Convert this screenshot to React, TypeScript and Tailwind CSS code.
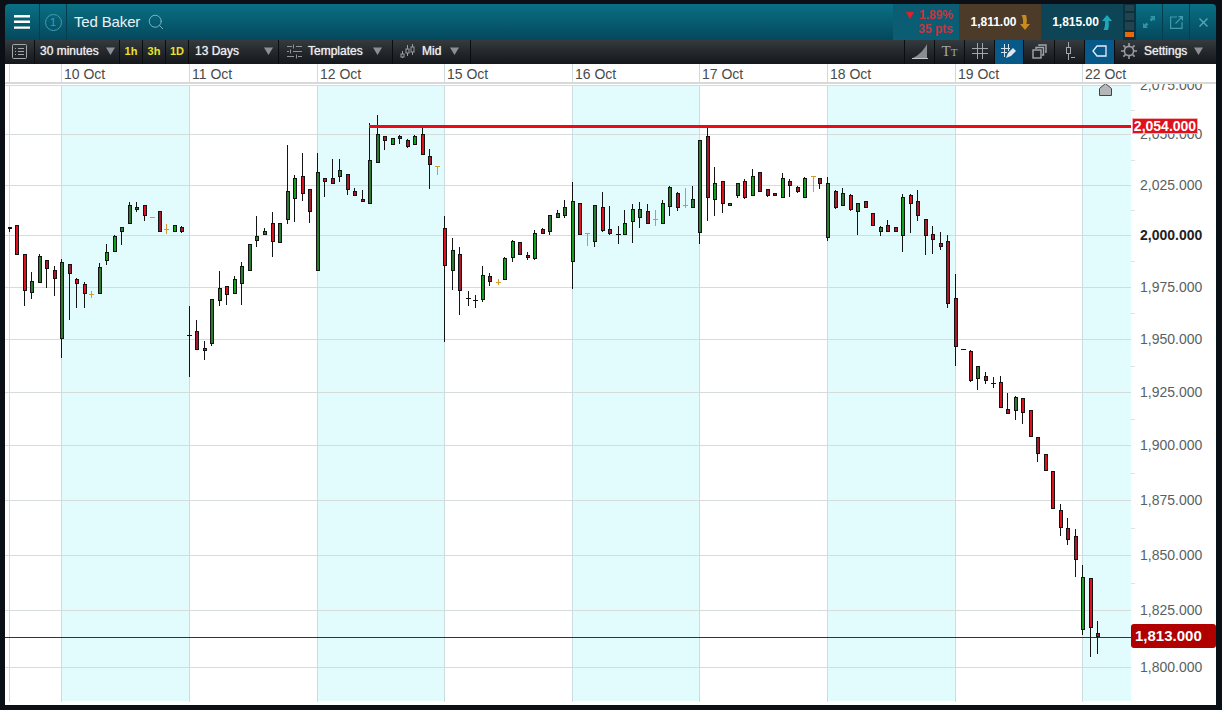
import { Search } from 'lucide-react';
import type { ReactNode } from 'react';

// zx, wick top, wick bottom, body top, body bottom, colour (zoomed-in coords, see seg())
type Bar = [number, number, number, number, number, string];
type Doji = [number, number, number, number];

const fills: Record<string, string> = { r: '#e0101c', R: '#a8182c', g: '#12a01e', G: '#2a7a32' };

const segA: Bar[] = [
  [30, 382, 395, 382, 388, 'G'], [51, 376, 466, 376, 466, 'r'], [74, 463, 617, 463, 572, 'r'], [96, 516, 596, 544, 578, 'G'],
  [120, 463, 548, 468, 548, 'G'], [141, 481, 564, 481, 506, 'R'], [164, 498, 587, 511, 536, 'R'], [185, 478, 773, 487, 716, 'G'],
  [209, 493, 659, 493, 521, 'R'], [231, 534, 624, 537, 551, 'r'], [254, 546, 623, 552, 581, 'r'], [299, 489, 581, 502, 581, 'G'],
  [321, 432, 495, 457, 482, 'g'], [345, 405, 455, 408, 455, 'g'], [366, 382, 435, 382, 395, 'G'], [390, 306, 371, 316, 371, 'G'],
  [411, 306, 336, 321, 329, 'G'], [435, 316, 363, 316, 347, 'r'], [480, 334, 395, 334, 395, 'R'], [525, 376, 395, 376, 395, 'g'],
  [546, 378, 399, 381, 396, 'R'], [591, 660, 749, 693, 749, 'R'], [614, 722, 780, 744, 752, 'G'], [636, 598, 738, 598, 732, 'G'],
  [660, 513, 618, 565, 602, 'G'], [681, 559, 615, 559, 584, 'r'], [705, 529, 581, 538, 581, 'g'], [726, 487, 615, 499, 551, 'G'],
  [750, 432, 512, 432, 512, 'G'], [771, 348, 440, 409, 422, 'G'], [795, 384, 404, 394, 404, 'G'], [819, 336, 470, 370, 425, 'r'],
  [840, 370, 428, 370, 428, 'G'], [864, 135, 372, 274, 359, 'G'], [885, 226, 365, 235, 298, 'g'], [909, 159, 303, 229, 281, 'r'],
  [930, 268, 369, 268, 335, 'R'], [954, 159, 512, 217, 512, 'G'],
];
const segB: Bar[] = [
  [45, 235, 291, 235, 245, 'r'], [69, 177, 251, 235, 251, 'R'], [90, 177, 246, 211, 230, 'G'], [114, 223, 285, 223, 269, 'R'],
  [135, 265, 287, 274, 287, 'R'], [159, 270, 305, 297, 305, 'R'], [180, 69, 311, 181, 311, 'G'], [204, 45, 188, 103, 188, 'G'],
  [225, 108, 150, 108, 122, 'R'], [249, 115, 134, 115, 134, 'g'], [270, 105, 132, 109, 116, 'R'], [294, 118, 144, 120, 141, 'R'],
  [315, 105, 134, 108, 134, 'g'], [339, 84, 164, 103, 164, 'r'], [360, 148, 267, 169, 194, 'R'], [405, 348, 725, 385, 497, 'r'],
  [429, 414, 570, 451, 512, 'G'], [450, 441, 645, 463, 572, 'R'], [519, 498, 606, 526, 600, 'g'], [540, 519, 558, 529, 545, 'R'],
  [585, 471, 539, 475, 539, 'g'], [609, 420, 486, 423, 473, 'g'], [630, 427, 464, 427, 464, 'R'], [654, 456, 480, 465, 474, 'R'],
  [675, 390, 480, 400, 477, 'g'], [699, 384, 401, 387, 401, 'R'], [720, 346, 405, 346, 395, 'G'], [744, 330, 353, 339, 353, 'G'],
  [765, 300, 354, 322, 347, 'G'], [789, 246, 567, 304, 485, 'g'], [810, 310, 404, 310, 404, 'r'], [855, 316, 440, 316, 425, 'G'],
  [879, 276, 396, 322, 393, 'r'], [900, 318, 405, 388, 402, 'R'], [945, 330, 404, 370, 404, 'g'],
];
const segC: Bar[] = [
  [9, 282, 398, 298, 335, 'g'], [30, 276, 353, 298, 323, 'G'], [54, 282, 341, 304, 341, 'R'], [99, 270, 341, 280, 341, 'g'],
  [120, 228, 318, 232, 292, 'G'], [144, 246, 303, 250, 293, 'R'], [189, 228, 293, 268, 293, 'G'], [210, 91, 402, 91, 368, 'G'],
  [234, 54, 333, 79, 263, 'R'], [255, 171, 318, 220, 269, 'g'], [279, 214, 309, 214, 281, 'r'], [300, 280, 287, 280, 287, 'G'],
  [324, 220, 264, 220, 258, 'G'], [345, 208, 267, 214, 264, 'r'], [369, 177, 257, 199, 257, 'g'], [390, 187, 245, 187, 245, 'R'],
  [414, 238, 261, 238, 258, 'R'], [435, 250, 257, 250, 257, 'R'], [459, 189, 263, 205, 263, 'g'], [480, 208, 261, 214, 227, 'R'],
  [504, 229, 249, 232, 246, 'R'], [525, 202, 263, 205, 263, 'g'], [570, 205, 237, 205, 221, 'R'], [594, 201, 393, 220, 383, 'G'],
  [618, 241, 297, 244, 294, 'R'], [639, 234, 287, 250, 287, 'G'], [663, 252, 303, 256, 300, 'r'], [684, 280, 375, 280, 305, 'G'],
  [708, 274, 293, 274, 293, 'R'], [729, 310, 347, 310, 347, 'r'], [753, 348, 378, 352, 365, 'G'], [774, 330, 365, 346, 365, 'R'],
  [798, 352, 365, 352, 365, 'R'], [819, 252, 426, 262, 377, 'g'], [843, 253, 369, 256, 281, 'r'], [864, 240, 333, 274, 318, 'R'],
  [888, 328, 435, 328, 377, 'R'], [909, 348, 432, 373, 391, 'R'], [933, 366, 420, 400, 410, 'R'],
];
const segD: Bar[] = [
  [23, 15, 234, 34, 221, 'R'], [47, 132, 408, 205, 350, 'R'], [93, 361, 456, 364, 454, 'r'], [114, 409, 480, 409, 446, 'G'],
  [138, 426, 462, 439, 453, 'R'], [183, 438, 533, 457, 533, 'r'], [204, 489, 551, 538, 551, 'R'], [228, 498, 570, 501, 543, 'G'],
  [249, 505, 582, 505, 548, 'r'], [273, 541, 620, 541, 620, 'r'], [294, 622, 696, 622, 671, 'R'], [318, 673, 722, 673, 722, 'r'],
];
const segE: Bar[] = [
  [99, 34, 146, 34, 146, 'r'], [123, 132, 228, 151, 203, 'r'], [144, 174, 255, 205, 239, 'R'], [168, 207, 351, 229, 299, 'R'],
  [189, 315, 525, 352, 509, 'g'], [213, 355, 591, 355, 503, 'r'], [234, 483, 582, 520, 532, 'R'],
];

// zx, wick top, wick bottom, cross y
const orangeA: Doji[] = [[275, 573, 593, 582], [456, 352, 352, 352], [500, 373, 402, 387]];
const orangeB: Doji[] = [[383, 199, 225, 199], [564, 537, 556, 546], [832, 400, 438, 400]];
const orangeC: Doji[] = [[75, 300, 348, 328], [165, 234, 294, 287], [549, 199, 246, 199]];
const blackDoji: Array<[number, number, number, number, number, number]> = [
  [0, 100, 569, 618, 832, 705], [310, 100, 474, 573, 618, 594], [310, 100, 495, 585, 624, 600],
  [310, 100, 924, 378, 432, 402], [940, 230, 159, 441, 474, 459], [940, 230, 69, 357, 357, 357],
];

function seg(x0: number, y0: number, bars: Bar[]) {
  return bars.map(([zx, wt, wb, bt, bb, c]) => {
    const left = Math.round(x0 + zx / 3 - 2);
    const top = Math.round(y0 + bt / 3);
    const bottom = Math.round(y0 + bb / 3);
    return (
      <g key={`${x0}-${zx}`}>
        <line x1={left + 1.5} x2={left + 1.5} y1={y0 + wt / 3} y2={y0 + wb / 3} stroke="#141414" />
        <rect x={left + 0.5} y={top + 0.5} width={3} height={Math.max(bottom - top - 1, 1)} fill={fills[c]} stroke="#141414" />
      </g>
    );
  });
}

function dojis(x0: number, y0: number, list: Doji[], color: string) {
  return list.map(([zx, wt, wb, cy]) => {
    const x = Math.floor(x0 + zx / 3) + 0.5;
    const y = Math.floor(y0 + cy / 3) + 0.5;
    return (
      <g key={`${x0}-${zx}`}>
        <rect x={x - 0.5} y={y0 + wt / 3} width={1} height={Math.max((wb - wt) / 3, 1)} fill={color} />
        <rect x={x - 2.5} y={y - 0.5} width={5} height={1} fill={color} />
      </g>
    );
  });
}

const gridYs = [85, 134, 185, 235, 287, 339, 392, 445, 500, 555, 610, 667];
const vLines = [9, 61, 189, 317, 444, 572, 699, 827, 955, 1082, 1131];
const bands = [[61, 189], [317, 444], [572, 699], [827, 955], [1082, 1131]];
const prices = ['2,075.000', '2,050.000', '2,025.000', '2,000.000', '1,975.000', '1,950.000', '1,925.000', '1,900.000', '1,875.000', '1,850.000', '1,825.000', '1,800.000'];
const days = [['10 Oct', 128], ['11 Oct', 128], ['12 Oct', 127], ['15 Oct', 128], ['16 Oct', 127], ['17 Oct', 128], ['18 Oct', 128], ['19 Oct', 127], ['22 Oct', 134]] as const;

function Caret() {
  return (
    <svg width="9" height="8" viewBox="0 0 9 8" className="shrink-0">
      <path d="M0 0.5h9L4.5 8z" fill="#8c9094" />
    </svg>
  );
}

function Cell({ w, active, children, className }: { w: string; active?: boolean; children?: ReactNode; className?: string }) {
  return (
    <div className={`${w} h-full shrink-0 flex items-center border-r border-[#0b0d0f] ${active ? 'bg-[#07598a]' : ''} ${className ?? ''}`}>
      {children}
    </div>
  );
}

function Toolbar() {
  return (
    <div className="h-[24px] flex text-[12px] leading-none text-[#eceded] bg-gradient-to-b from-[#353a3f] to-[#14181c]">
      <Cell w="w-[30px]" className="justify-center pb-[2px]">
        <svg width="15" height="15" viewBox="0 0 15 15" fill="none" stroke="#a4a8ac">
          <rect x="0.5" y="0.5" width="14" height="14" rx="1" />
          <path d="M3 4.5h1M6 4.5h6M3 7.5h1M6 7.5h6M3 10.5h1M6 10.5h6" />
        </svg>
      </Cell>
      <Cell w="w-[85px]" className="pl-[5px] gap-[7px] pb-[2px]"><span className="[text-shadow:0_0_1px_#ddd]">30 minutes</span><Caret /></Cell>
      {['1h', '3h', '1D'].map(t => (
        <Cell key={t} w="w-[23px]" className="justify-center font-bold text-[11px] text-[#e8e22a] pb-[2px]">{t}</Cell>
      ))}
      <Cell w="w-[90px]" className="pl-[6px] justify-between pr-[5px] pb-[2px]"><span className="[text-shadow:0_0_1px_#ddd]">13 Days</span><Caret /></Cell>
      <Cell w="w-[114px]" className="pl-[8px] pr-[11px] gap-[6px] pb-[2px]">
        <svg width="15" height="15" viewBox="0 0 15 15" stroke="#8f9397" fill="none" className="shrink-0">
          <path d="M0 2.5h5M9 2.5h6M0 7.5h2M6 7.5h9M0 12.5h7M11 12.5h4M6.5 0.5v4M3.5 5.5v4M9.5 10.5v4" />
        </svg>
        <span className="[text-shadow:0_0_1px_#ddd]">Templates</span><span className="ml-[4px]"><Caret /></span>
      </Cell>
      <Cell w="w-[78px]" className="pl-[7px] gap-[7px] pb-[2px]">
        <svg width="15" height="15" viewBox="0 0 15 15" stroke="#9a9ea2" fill="none">
          <path d="M2.5 7v7M7.5 1v11M12.5 0v11" />
          <rect x="1" y="10" width="3" height="3" fill="#22272b" />
          <rect x="6" y="5" width="3" height="4" fill="#22272b" />
          <rect x="11" y="3" width="3" height="5" fill="#22272b" />
        </svg>
        <span className="[text-shadow:0_0_1px_#ddd]">Mid</span><span className="ml-[2px]"><Caret /></span>
      </Cell>
      <div className="flex-1 border-r border-[#0b0d0f]" />
      <Cell w="w-[30px]" className="justify-center pb-[2px]">
        <svg width="16" height="16" viewBox="0 0 16 16"><path d="M1 15C7 12 12 7 15 1v14z" fill="#8a8d90" /><path d="M0 15.5h16" stroke="#c4c6c8" /></svg>
      </Cell>
      <Cell w="w-[30px]" className="justify-center text-[#a4a7aa] font-['Liberation_Serif',serif] pb-[2px]">
        <span className="text-[15px] leading-none">T</span><span className="text-[11px] leading-none mt-[3px]">T</span>
      </Cell>
      <Cell w="w-[30px]" className="justify-center pb-[2px]">
        <svg width="16" height="16" viewBox="0 0 16 16" stroke="#a4a7aa"><path d="M0 5.5h16M0 10.5h16M5.5 0v16M10.5 0v16" /></svg>
      </Cell>
      <Cell w="w-[29px]" active className="justify-center pb-[2px]">
        <svg width="16" height="15" viewBox="0 0 16 15">
          <path d="M0 4.5h9M0 8.5h6M3.5 0v13M7.5 0v7" stroke="#d8e2e8" />
          <path d="M5 14l2-5 5-5 3 3-5 5z" fill="#dfe7ec" />
        </svg>
      </Cell>
      <Cell w="w-[31px]" className="justify-center pb-[2px]">
        <svg width="15" height="15" viewBox="0 0 15 15" fill="none" stroke="#a4a7aa" strokeWidth="1.4">
          <rect x="1" y="6" width="8" height="8" /><path d="M4 5V3.500h7.500V11H10M7 2V1h7v7h-1" />
        </svg>
      </Cell>
      <Cell w="w-[30px]" className="justify-center pb-[2px]">
        <svg width="10" height="18" viewBox="0 0 10 18" stroke="#a4a7aa" fill="none">
          <path d="M3.500 0v5M3.500 11v7M6 15.500h4" /><rect x="1.500" y="5.500" width="4" height="6" />
        </svg>
      </Cell>
      <Cell w="w-[30px]" active className="justify-center pb-[2px]">
        <svg width="15" height="12" viewBox="0 0 15 12" fill="none" stroke="#e8eef2" strokeWidth="1.300">
          <path d="M5 1h9v10H5L1 6z" />
        </svg>
      </Cell>
      <div className="w-[101px] h-full flex items-center pl-[6px] gap-[7px] pb-[2px]">
        <svg width="16" height="16" viewBox="0 0 16 16" fill="none" stroke="#9a9da0" strokeWidth="1.6">
          <circle cx="8" cy="8" r="4.6" /><path d="M8 0v3M8 13v3M0 8h3M13 8h3M2.4 2.4l2 2M11.6 11.6l2 2M2.4 13.6l2-2M11.6 4.4l2-2" />
        </svg>
        <span className="[text-shadow:0_0_1px_#ddd]">Settings</span><Caret />
      </div>
    </div>
  );
}

function Header() {
  return (
    <div className="h-[36px] flex rounded-t-[4px] overflow-hidden bg-gradient-to-b from-[#0a7085] to-[#05485c] text-white">
      <div className="w-[35px] flex items-center justify-center border-r border-[#053d4e]">
        <svg width="16" height="14" viewBox="0 0 16 14" fill="#fff"><path d="M0 0h16v2.4H0zM0 5.6h16V8H0zM0 11.4h16v2.4H0z" /></svg>
      </div>
      <div className="w-[27px] flex items-center justify-center border-r border-[#053d4e]">
        <div className="w-[17px] h-[17px] rounded-full border border-[#3f9fae] text-[#3f9fae] text-[11px] leading-[15px] text-center">1</div>
      </div>
      <div className="flex-1 flex items-center pl-[7px] gap-[7px] text-[15px] text-[#e9f3f5] tracking-[-0.15px]">
        Ted Baker
        <Search size={18} strokeWidth={1.2} color="#7cc0cc" />
      </div>
      <div className="w-[66px] bg-[#0a5d73] flex flex-col items-end justify-center pr-[6px] text-[12px] leading-[14px] font-bold text-[#c8343f]">
        <span className="flex items-center gap-[5px]">
          <svg width="8" height="7" viewBox="0 0 8 7"><path d="M0 0h8L4 7z" fill="#e0202a" /></svg>
          1.89%
        </span>
        <span>35 pts</span>
      </div>
      <div className="w-[82px] bg-[#4b3b28] flex items-center justify-center gap-[3px] text-[12px] font-bold">
        1,811.00
        <svg width="10" height="15" viewBox="0 0 10 15"><path d="M1.500 0h4.500c1 3 1 6 .5 9H10L5 15 0 9h3c.4-3 0-6-1.500-9z" fill="#c98a1e" /></svg>
      </div>
      <div className="w-[82px] bg-[#0d4557] flex items-center justify-center gap-[3px] text-[12px] font-bold">
        1,815.00
        <svg width="10" height="15" viewBox="0 0 10 15"><path d="M1.500 15h4.500c1-3 1-6 .5-9H10L5 0 0 6h3c.4 3 0 6-1.500 9z" fill="#1fa8b8" /></svg>
      </div>
      <div className="w-[13px] bg-[#0a3240] flex flex-col gap-[2px] pt-[1px] pb-[3px] px-[2px]">
        <div className="h-[6px] bg-[#24434e]" />
        <div className="h-[7px] bg-[#24434e]" />
        <div className="h-[8px] bg-[#24434e]" />
        <div className="h-[5px] bg-[#e8680c]" />
      </div>
      <div className="w-[27px] flex items-center justify-center border-r border-[#053d4e]">
        <svg width="12" height="12" viewBox="0 0 12 12" fill="#2f95a6"><path d="M7 0h5v5l-1.600-1.600-2 2-1.800-1.800 2-2zM0 12V7l1.600 1.600 2-2 1.800 1.800-2 2L5 12z" /></svg>
      </div>
      <div className="w-[27px] flex items-center justify-center border-r border-[#053d4e]">
        <svg width="13" height="13" viewBox="0 0 13 13" fill="none" stroke="#3f9aaa" strokeWidth="1.200"><path d="M7 1H0.600v11.400H12V6M5.500 7.500L12 1M8.500 .6h4v4" /></svg>
      </div>
      <div className="w-[26px] flex items-center justify-center">
        <svg width="9" height="9" viewBox="0 0 9 9" stroke="#5aa8b8" strokeWidth="1.300"><path d="M.5 .5l8 8M8.500 .5l-8 8" /></svg>
      </div>
    </div>
  );
}

function Plot() {
  return (
    <svg width={1126} height={621} viewBox="5 84 1126 621" shapeRendering="crispEdges" className="shrink-0 block">
      {bands.map(([a, b]) => <rect key={a} x={a} y={85} width={b - a} height={616} fill="#e2fcfe" />)}
      {gridYs.map(y => <line key={y} x1={5} x2={1131} y1={y + 0.5} y2={y + 0.5} stroke="#d6dcdc" />)}
      {vLines.map(x => <line key={x} x1={x + 0.5} x2={x + 0.5} y1={85} y2={702} stroke="#ccdde2" />)}
      <line x1={5} x2={1131} y1={637.5} y2={637.5} stroke="#333" />
      {seg(0, 100, segA)}
      {seg(310, 100, segB)}
      {seg(630, 110, segC)}
      {seg(940, 230, segD)}
      {seg(1020, 460, segE)}
      {dojis(0, 100, orangeA, '#d9982e')}
      {dojis(310, 100, orangeB, '#d9982e')}
      {dojis(630, 110, orangeC, '#d9982e')}
      {blackDoji.map(([x0, y0, zx, wt, wb, cy]) => (
        <g key={`${x0}-${zx}`}>{dojis(x0, y0, [[zx, wt, wb, cy]], '#141414')}</g>
      ))}
      <rect x={369} y={125} width={762} height={3} fill="#ee0a14" />
      <path d="M1099.5 95.5V88.5L1105.5 83.5L1111.5 88.5V95.5Z" fill="#b4b6b8" stroke="#444" shapeRendering="auto" />
    </svg>
  );
}

function PriceAxis() {
  return (
    <div className="relative flex-1 overflow-hidden text-[14px] leading-none text-[#5a5f62]">
      {gridYs.map((y, i) => (
        <div key={y} className="absolute left-[9px]" style={{ top: y - 84 - 7, fontWeight: i === 3 ? 700 : 400, color: i === 3 ? '#222' : undefined }}>
          {prices[i]}
        </div>
      ))}
      {gridYs.slice(0, -1).map((y, i) => (
        <div key={y} className="absolute left-0 w-[4px] h-px bg-[#dde3e3]" style={{ top: (y + gridYs[i + 1]) / 2 - 84 }} />
      ))}
      <div className="absolute left-[1px] top-[34px] w-[66px] h-[16px] bg-[#e0101c] border border-[#f4b0b0] text-white font-bold text-[14px] leading-[14px] text-center">2,054.000</div>
      <div className="absolute left-0 top-[540px] w-[85px] h-[24px] rounded-[3px] bg-[#b00000] text-white font-bold text-[15px] leading-[24px] pl-[4px]">1,813.000</div>
    </div>
  );
}

export default function App() {
  return (
    <div className="w-[1222px] h-[710px] bg-[#0a1015] pl-[5px] pr-[6px] pt-[4px] pb-[5px] flex flex-col overflow-hidden font-['Liberation_Sans',Arial,sans-serif]">
      <Header />
      <Toolbar />
      <div className="h-[20px] flex bg-white border-b-2 border-[#d8d8d8] text-[14px] leading-[20px] text-[#4a4a4a] shrink-0">
        <div className="w-[5px] border-r border-[#ccdde2]" />
        <div className="w-[52px] border-r border-[#ccdde2]" />
        {days.map(([d, w], i) => (
          <div key={d} className="pl-[2px] border-r border-[#ccdde2] last:border-r-0" style={{ width: i === 8 ? undefined : w }}>{d}</div>
        ))}
      </div>
      <div className="flex-1 flex bg-white min-h-0">
        <Plot />
        <PriceAxis />
      </div>
    </div>
  );
}
